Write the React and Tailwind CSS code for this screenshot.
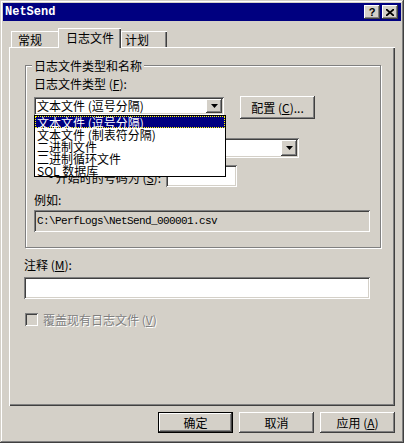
import React from 'react';

// classic 3D bevels
const RAISED = 'shadow-[inset_-1px_-1px_#404040,inset_1px_1px_#ffffff,inset_-2px_-2px_#808080,inset_2px_2px_#d4d0c8]';
const SUNKEN = 'shadow-[inset_1px_1px_#808080,inset_-1px_-1px_#ffffff,inset_2px_2px_#404040,inset_-2px_-2px_#d4d0c8]';

const Arrow = () => (
  <div className={`w-[16px] h-full shrink-0 bg-[#d4d0c8] flex items-center justify-center ${RAISED}`}>
    <svg width="7" height="4" viewBox="0 0 7 4">
      <polygon points="0,0 7,0 3.5,4" fill="#000000" />
    </svg>
  </div>
);

const Btn = ({ children, isDefault, className = '' }) => (
  <div className={`w-[75px] h-[21px] ${isDefault ? 'border border-black' : ''} ${className}`}>
    <div className={`w-full h-full bg-[#d4d0c8] flex items-center justify-center leading-[12px] ${RAISED}`}>
      {children}
    </div>
  </div>
);

const LIST_ITEMS = ['文本文件 (逗号分隔)', '文本文件 (制表符分隔)', '二进制文件', '二进制循环文件', 'SQL 数据库'];

export default function App() {
  return (
    <div className="w-[404px] h-[443px] bg-[#d4d0c8] p-[3px] flex flex-col text-[12px] text-black font-['Noto_Sans_CJK_SC',sans-serif] shadow-[inset_-1px_-1px_#404040,inset_1px_1px_#d4d0c8,inset_-2px_-2px_#808080,inset_2px_2px_#ffffff]">
      {/* title bar */}
      <div className="h-[18px] bg-[#000080] flex items-center pl-[2px] pr-[3px]">
        <span className="flex-1 text-white font-bold text-[12px] leading-[14px] font-['Liberation_Mono',monospace]">NetSend</span>
        <div className="flex gap-[2px]">
          <div className={`w-[16px] h-[14px] bg-[#d4d0c8] flex items-center justify-center ${RAISED}`}>
            <span className="font-bold text-[11px] leading-[10px] font-['Liberation_Sans',sans-serif]">?</span>
          </div>
          <div className={`w-[16px] h-[14px] bg-[#d4d0c8] flex items-center justify-center ${RAISED}`}>
            <svg width="8" height="7" viewBox="0 0 8 7">
              <path d="M0 0 L8 7 M8 0 L0 7" stroke="#000000" strokeWidth="1.7" />
            </svg>
          </div>
        </div>
      </div>

      <div className="px-[6px] pt-[7px] flex flex-col">
        {/* tabs */}
        <div className="h-[19px] flex items-end pl-[2px]">
          <div className="w-[47px] h-[16px] pl-[7px] pt-[3px] leading-[12px] shadow-[inset_1px_1px_#ffffff]">常规</div>
          <div className="relative z-10 -mb-[1px] w-[63px] h-[20px] pl-[8px] pt-[4px] leading-[12px] bg-[#d4d0c8] shadow-[inset_1px_1px_#ffffff,inset_-1px_0_#404040,inset_-2px_0_#808080]">日志文件</div>
          <div className="w-[46px] h-[16px] pl-[4px] pt-[3px] leading-[12px] shadow-[inset_1px_1px_#ffffff,inset_-1px_0_#404040,inset_-2px_0_#808080]">计划</div>
        </div>

        {/* panel */}
        <div className="w-[386px] h-[359px] pl-[15px] flex flex-col shadow-[inset_1px_1px_#ffffff,inset_-1px_-1px_#404040,inset_-2px_-2px_#808080]">
          <div className="relative ml-[1px] mt-[18px] w-[356px] h-[183px] pl-[8px] flex flex-col border border-[#808080] shadow-[inset_1px_1px_#ffffff,1px_1px_#ffffff]">
            <span className="absolute left-[6px] -top-[7px] px-[2px] bg-[#d4d0c8] leading-[14px]">日志文件类型和名称</span>

            <div className="mt-[12px] leading-[12px]">日志文件类型 (<u>F</u>):</div>

            <div className="mt-[7px] flex items-start">
              <div className={`relative w-[190px] h-[18px] bg-white p-[2px] flex ${SUNKEN}`}>
                <span className="flex-1 pl-[1px] leading-[14px]">文本文件 (逗号分隔)</span>
                <Arrow />
                {/* open dropdown */}
                <div className="absolute left-0 top-full z-20 w-[192px] bg-white border border-black flex flex-col">
                  {LIST_ITEMS.map((t, i) => (
                    <div
                      key={t}
                      className={`h-[12px] pl-[1px] leading-[12px] whitespace-nowrap ${i === 0 ? 'bg-[#000080] text-white border border-dotted border-[#ffff00]' : 'border border-transparent'}`}
                    >
                      {t}
                    </div>
                  ))}
                </div>
              </div>
              <Btn className="ml-[16px] -mt-[1px] !h-[23px]">配置 (<u>C</u>)...</Btn>
            </div>

            {/* label hidden under the open list */}
            <div className="mt-[4px] h-[12px]" />

            <div className={`mt-[3px] w-[265px] h-[20px] bg-white p-[2px] flex justify-end ${SUNKEN}`}>
              <Arrow />
            </div>

            <div className="mt-[7px] flex items-center">
              <span className="w-[132px] pr-[5px] text-right leading-[12px] pt-[3px]">开始时的号码为 (<u>S</u>):</span>
              <div className={`w-[71px] h-[22px] bg-white ${SUNKEN}`} />
            </div>

            <div className="mt-[7px] leading-[12px]">例如:</div>
            <div className={`mt-[4px] w-[336px] h-[22px] px-[3px] flex items-center ${SUNKEN}`}>
              <span className="text-[11px] tracking-[-0.6px] leading-[12px] font-['Liberation_Mono',monospace]">C:\PerfLogs\NetSend_000001.csv</span>
            </div>
          </div>

          <div className="mt-[11px] leading-[12px]">注释 (<u>M</u>):</div>
          <div className={`mt-[6px] w-[346px] h-[22px] bg-white ${SUNKEN}`} />

          <div className="mt-[14px] flex items-center">
            <div className={`w-[13px] h-[13px] ml-[1px] bg-[#d4d0c8] ${SUNKEN}`} />
            <span className="ml-[5px] leading-[12px] text-[#808080] [text-shadow:1px_1px_0_#ffffff]">覆盖现有日志文件 (<u>V</u>)</span>
          </div>
        </div>

        {/* dialog buttons */}
        <div className="mt-[6px] flex justify-end gap-[6px]">
          <Btn isDefault>确定</Btn>
          <Btn>取消</Btn>
          <Btn>应用 (<u>A</u>)</Btn>
        </div>
      </div>
    </div>
  );
}
